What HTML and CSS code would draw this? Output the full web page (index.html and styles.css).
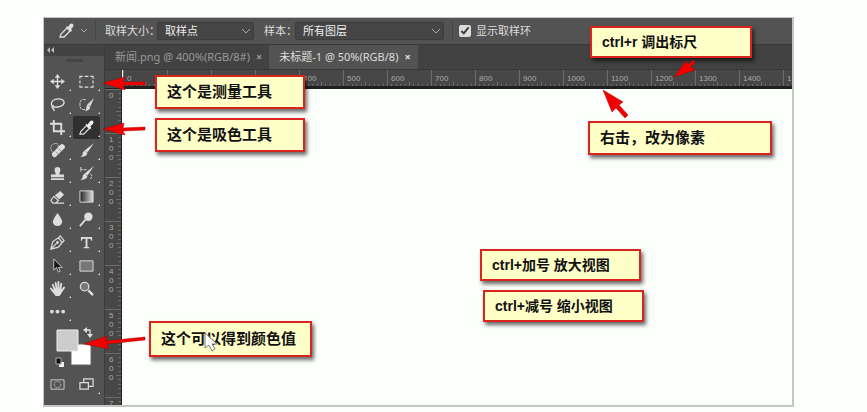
FILE: index.html
```html
<!DOCTYPE html>
<html lang="zh-CN">
<head>
<meta charset="utf-8">
<title>标尺与吸色工具</title>
<link rel="stylesheet" href="styles.css">
</head>
<body>
<main class="window">
  <form class="options">
    <button type="button" class="current" aria-label="吸管工具">
      <svg width="30" height="18" viewBox="0 0 30 18"><path d="M3 15l1-3 6-6 3 3-6 6z" fill="none" stroke="#ddd" stroke-width="1.3"/><path d="M9 5l1-1 1 1 2-3q2-1 3 0t0 3l-2 2 1 1-1 2z" fill="#ddd"/><path d="M24 7l3 3 3-3" fill="none" stroke="#aaa"/></svg>
    </button>
    <label class="size-label" for="size">取样大小：</label>
    <select id="size" class="size"><option>取样点</option></select>
    <label class="layer-label" for="layer">样本：</label>
    <select id="layer" class="layer"><option>所有图层</option></select>
    <label class="ring"><input type="checkbox" checked>显示取样环</label>
  </form>
  <div class="work">
    <aside class="tools">
      <div class="collapse"><svg width="8" height="6" viewBox="0 0 8 6"><path d="M4 0v6L1 3zM8 0v6L5 3z" fill="#bbb"/></svg></div>
      <div class="grip"></div>
      <div class="grid">
        <button aria-label="移动"><svg viewBox="0 0 16 16"><path d="M8 2v12M2 8h12" stroke="#ddd" stroke-width="1.4"/><path d="M8 0l3 4H5zM8 16l3-4H5zM0 8l4-3v6zM16 8l-4-3v6z" fill="#ddd"/></svg></button>
        <button aria-label="选框"><svg viewBox="0 0 16 16"><path d="M1 5V2.500h3M6 2.500h4M12 2.500h3V5M15 7v3M15 12v2h-3M10 14H6M4 14H1v-2M1 10V7" fill="none" stroke="#ddd" stroke-width="1.200"/></svg></button>
        <button aria-label="套索"><svg viewBox="0 0 16 16"><path d="M4 11C-1 8 2 2 9 2s8 6 2 8-7 0-7 0M4 9q-3 1-1 3t1 3" fill="none" stroke="#ddd" stroke-width="1.400"/></svg></button>
        <button aria-label="快速选择"><svg viewBox="0 0 16 16"><path d="M7 3Q1 1 1 8t6 5" fill="none" stroke="#ddd" stroke-dasharray="3 1"/><path d="M16 1l-4 9-3-2zM9 8l3 3q-1 4-6 4 2-1 2-5z" fill="#ddd"/></svg></button>
        <button aria-label="裁剪"><svg viewBox="0 0 16 16"><path d="M0 4h12v12M4 0v12h12" fill="none" stroke="#ddd" stroke-width="2"/></svg></button>
        <button class="active" aria-label="吸管"><svg viewBox="0 0 16 16"><path d="M1 15l1-3 6-6 3 3-6 6z" fill="none" stroke="#ddd" stroke-width="1.300"/><path d="M7 5l1-1 1 1 3-4q2-1 3 0t0 3l-3 3 1 1-1 2z" fill="#eee"/></svg></button>
        <button aria-label="修复画笔"><svg viewBox="0 0 16 16"><path d="M2 9Q-1 3 4 1t5 3" fill="none" stroke="#ddd" stroke-dasharray="2 1"/><path d="M2 11L12 1q4 0 4 4L6 15q-4 1-4-4z" fill="#ddd"/><path d="M8 5l4 4M5 8l4 4" stroke="#535353" stroke-dasharray="1 1"/></svg></button>
        <button aria-label="画笔"><svg viewBox="0 0 16 16"><path d="M16 0L9 10 6 8zM6 8l3 3q-1 4-8 4 3-1 3-5z" fill="#ddd"/></svg></button>
        <button aria-label="图章"><svg viewBox="0 0 16 16"><path d="M6 8Q3 1 8 1t2 7v1h5v3H1V9h5zM1 13h14v2H1z" fill="#ddd"/></svg></button>
        <button aria-label="历史画笔"><svg viewBox="0 0 16 16"><path d="M1 4h7M2 1v5M12 8q4 4-1 6" fill="none" stroke="#ddd" stroke-dasharray="3 1"/><path d="M16 0L9 10 6 8zM6 8l3 3q-1 4-8 4 3-1 3-5z" fill="#ddd"/></svg></button>
        <button aria-label="橡皮擦"><svg viewBox="0 0 16 16"><path d="M5 7l6-5 4 4-5 5z" fill="#ddd"/><path d="M4 8l5 4-3 3H3l-2-3zM6 15h9" fill="none" stroke="#ddd" stroke-width="1.300"/></svg></button>
        <button aria-label="渐变"><svg viewBox="0 0 16 16"><defs><linearGradient id="fade"><stop stop-color="#222"/><stop offset="1" stop-color="#ddd"/></linearGradient></defs><path d="M1 2h14v12H1z" fill="url(#fade)" stroke="#ddd"/></svg></button>
        <button aria-label="模糊"><svg viewBox="0 0 16 16"><path d="M8 1q5 7 5 9a5 5 0 0 1-10 0q0-2 5-9z" fill="#ddd"/></svg></button>
        <button aria-label="减淡"><svg viewBox="0 0 16 16"><circle cx="10" cy="5" r="4.500" fill="#ddd"/><path d="M7 8l-6 7" stroke="#ddd" stroke-width="2"/></svg></button>
        <button aria-label="钢笔"><svg viewBox="0 0 16 16"><path d="M1 15L3 7l6-4 4 5-4 5zM1 15l6-6M9 3l2-2 4 5-2 2" fill="none" stroke="#ddd" stroke-width="1.300"/><circle cx="8" cy="8" r="1.500" fill="#ddd"/></svg></button>
        <button aria-label="文字"><svg viewBox="0 0 16 16"><path d="M2 2h12v4h-1q0-2-2-2H9v8q0 1 2 1v1H5v-1q2 0 2-1V4H5Q3 4 3 6H2z" fill="#ddd"/></svg></button>
        <button aria-label="路径选择"><svg viewBox="0 0 16 16"><path d="M4 1v12l3-3 2 5 2-1-2-4h4z" fill="#151515" stroke="#ccc"/></svg></button>
        <button aria-label="矩形"><svg viewBox="0 0 16 16"><path d="M1 3h14v11H1z" fill="#777" stroke="#ddd"/></svg></button>
        <button aria-label="抓手"><svg viewBox="0 0 16 16"><path d="M5 9L3 4M7 8L6 2M9 8V1M11 9l1-6M4 12L1 8M12 11l3-4" stroke="#ddd" stroke-width="2" stroke-linecap="round"/><path d="M4 8h8l1 3q-1 4-3 5H6q-2-2-3-5z" fill="#ddd"/></svg></button>
        <button class="plain" aria-label="缩放"><svg viewBox="0 0 16 16"><circle cx="6" cy="6" r="4.500" fill="#777" stroke="#ddd" stroke-width="1.400"/><path d="M10 10l5 5" stroke="#ddd" stroke-width="2.500"/></svg></button>
        <button aria-label="更多"><svg viewBox="0 0 16 16"><circle cx="2" cy="8" r="2" fill="#ddd"/><circle cx="8" cy="8" r="2" fill="#ddd"/><circle cx="14" cy="8" r="2" fill="#ddd"/></svg></button>
      </div>
      <svg class="swatches" width="60" height="50" viewBox="0 0 60 50"><path d="M27 21h20v21H27z" fill="#fff" stroke="#666"/><path d="M13 7h21v21H13z" fill="#ccc" stroke="#eee"/><path d="M42 7h4v5" fill="none" stroke="#ddd" stroke-width="1.300"/><path d="M43 4v6l-4-3zM43 11h6l-3 4z" fill="#ddd"/><path d="M15 39h5v5h-5z" fill="#eee"/><path d="M12 35h5v6h-5z" fill="#111" stroke="#aaa"/></svg>
      <div class="grid modes">
        <button class="plain" aria-label="快速蒙版"><svg viewBox="0 0 16 16"><path d="M1 3h14v10H1z" fill="none" stroke="#ccc"/><circle cx="8" cy="8" r="3.500" fill="none" stroke="#ccc" stroke-dasharray="2 1"/></svg></button>
        <button aria-label="屏幕模式"><svg viewBox="0 0 16 16"><path d="M5 8V2h10v8h-5" fill="none" stroke="#ddd" stroke-width="1.300"/><path d="M1 6h9v7H1z" fill="#535353" stroke="#ddd" stroke-width="1.300"/></svg></button>
      </div>
    </aside>
    <section class="document">
      <nav class="tabs">
        <div class="tab"><a href="#first">新闻.png @ 400%(RGB/8#)</a><button aria-label="关闭">×</button></div>
        <div class="tab selected"><a href="#second">未标题-1 @ 50%(RGB/8)</a><button aria-label="关闭">×</button></div>
      </nav>
      <div class="sheet">
        <div class="corner"></div>
        <div class="ruler across">
          <svg class="ticks" width="100%" height="100%"><defs><pattern id="tx" width="44" height="16" patternUnits="userSpaceOnUse"><path d="M0 0h1v16H0z" fill="#6c6c6c"/><path d="M4 14h1v2H4zM9 14h1v2H9zM13 14h1v2h-1zM18 14h1v2h-1zM22 12h1v4h-1zM26 14h1v2h-1zM31 14h1v2h-1zM35 14h1v2h-1zM40 14h1v2h-1z" fill="#6c6c6c"/></pattern></defs><rect width="100%" height="100%" fill="url(#tx)"/></svg>
          <span>0</span><span>100</span><span>200</span><span>300</span><span>400</span><span>500</span><span>600</span><span>700</span><span>800</span><span>900</span><span>1000</span><span>1100</span><span>1200</span><span>1300</span><span>1400</span><span>1</span>
        </div>
        <div class="ruler down">
          <svg class="ticks" width="100%" height="100%"><defs><pattern id="ty" width="17" height="44" patternUnits="userSpaceOnUse"><path d="M0 0h17v1H0z" fill="#6c6c6c"/><path d="M13 4h3v1h-3zM13 9h3v1h-3zM13 13h3v1h-3zM13 18h3v1h-3zM11 22h5v1h-5zM13 26h3v1h-3zM13 31h3v1h-3zM13 35h3v1h-3zM13 40h3v1h-3z" fill="#6c6c6c"/></pattern></defs><rect width="100%" height="100%" fill="url(#ty)"/></svg>
          <span>0</span><span>1<br>0<br>0</span><span>2<br>0<br>0</span><span>3<br>0<br>0</span><span>4<br>0<br>0</span><span>5<br>0<br>0</span><span>6<br>0<br>0</span><span>7</span>
        </div>
        <div class="canvas"></div>
      </div>
    </section>
  </div>
  <p class="note measure">这个是测量工具</p>
  <p class="note pick">这个是吸色工具</p>
  <p class="note show">ctrl+r 调出标尺</p>
  <p class="note unit">右击，改为像素</p>
  <p class="note grow">ctrl+加号 放大视图</p>
  <p class="note shrink">ctrl+减号 缩小视图</p>
  <p class="note value">这个可以得到颜色值</p>
  <svg class="arrows" width="750" height="388" viewBox="0 0 750 388">
    <g fill="#f20000" stroke="#a00" stroke-width=".5">
      <path d="M59 65l22-6-2 5h22v3H79l2 5z"/>
      <path d="M59 111l21-6-1 5 22-1v3l-22 1 2 4z"/>
      <path d="M630 59l12-16 2 4 5-5 2 2-4 5 4 3z"/>
      <path d="M559 72l20 12-4 3 9 10-3 3-9-10-4 4z"/>
      <path d="M40 326l23-8-1 5 39-4v3l-38 4 2 5z"/>
    </g>
    <path d="M161 315v15l4-3 3 6 3-2-3-5h5z" fill="#fff" stroke="#777"/>
  </svg>
</main>
</body>
</html>
```
FILE: styles.css
```css
* { box-sizing: border-box; }
body {
  margin: 0;
  padding: 17px 73px 6px 43px;
  background: #fdfffd;
  font: 11px/16px "Noto Sans", "Noto Sans CJK SC", sans-serif;
  color: #ddd;
}
button { border: 0; padding: 0; background: none; color: inherit; font: inherit; }
.window { position: relative; border: 1px solid #c4c6c4; border-width: 1px 2px 2px 1px; }
.options { display: flex; align-items: center; height: 27px; background: #535353; border-bottom: 1px solid #3a3a3a; }
.current { width: 52px; height: 20px; margin-right: 9px; padding-left: 13px; border-right: 1px solid #444; }
.current svg { display: block; }
.size-label { width: 52px; white-space: nowrap; }
select {
  appearance: none;
  height: 18px;
  padding: 0 7px;
  border: 1px solid #3d3d3d;
  border-radius: 2px;
  color: #eee;
  font: inherit;
  line-height: 16px;
  background:
    linear-gradient(45deg, transparent 46%, #aaa 46% 60%, transparent 60%) right 7px center / 4px 4px no-repeat,
    linear-gradient(-45deg, transparent 46%, #aaa 46% 60%, transparent 60%) right 3px center / 4px 4px no-repeat,
    #454545;
}
.size { width: 97px; margin-right: 10px; }
.layer-label { width: 31px; white-space: nowrap; }
.layer { width: 149px; }
.ring { display: flex; align-items: center; gap: 5px; height: 20px; margin-left: 8px; padding-left: 6px; border-left: 1px solid #444; white-space: nowrap; }
.ring input { width: 12px; height: 12px; margin: 0; accent-color: #ddd; }
.work { display: flex; }
.tools { width: 61px; flex: none; background: #535353; border-right: 1px solid #3c3c3c; }
.collapse { height: 11px; padding: 2px; background: #434343; line-height: 0; }
.grip { width: 17px; height: 3px; margin: 3px auto 8px; background: #454545; }
.grid { display: grid; grid-template-columns: 27px 27px; column-gap: 2px; }
.grid button { position: relative; display: grid; place-items: center; height: 23px; border-radius: 2px; }
.grid button svg { width: 15px; height: 15px; }
.grid button::after { content: ""; position: absolute; right: 0; bottom: 2px; border: 1px solid; border-color: transparent #ddd #ddd transparent; }
.grid .plain::after { content: none; }
.grid .active { background: #303030; }
.swatches { display: block; }
.modes { padding-bottom: 9px; }
.document { flex: 1; min-width: 0; display: flex; flex-direction: column; }
.tabs { display: flex; height: 25px; background: #424242; border-bottom: 1px solid #383838; }
.tab { display: flex; align-items: center; gap: 6px; padding: 0 7px 0 10px; color: #999; white-space: nowrap; }
.tab a { color: inherit; text-decoration: none; }
.tab button { font-weight: bold; }
.selected { background: #535353; color: #ddd; }
.sheet { flex: 1; display: grid; grid-template-columns: 17px 1fr; grid-template-rows: 19px 1fr; background: #fdfffd; }
.corner { background: #474747; border-right: 1px solid #333; border-bottom: 1px solid #222; }
.ruler { position: relative; display: flex; overflow: hidden; background: #474747; color: #aaa; font: 8px/9px "Liberation Sans", sans-serif; }
.ticks { position: absolute; inset: 0; }
.across { margin-left: 1px; border-bottom: 3px solid #202020; }
.across span { flex: 0 0 44px; padding: 4px 0 0 4px; }
.down { flex-direction: column; border-right: 1px solid #222; height: 0; min-height: 100%; }
.down span { flex: 0 0 44px; padding: 2px 0 0 4px; }
.note { position: absolute; margin: 0; padding: 0 10px; border: 2px solid #d9251d; background: #ffffc8; box-shadow: 2px 3px 4px #0009; color: #111; font: bold 15px/30px "Liberation Sans", "Noto Sans CJK SC", sans-serif; white-space: nowrap; }
.measure, .pick { left: 111px; width: 150px; }
.measure { top: 57px; }
.pick { top: 100px; }
.show, .grow, .shrink { font-size: 14px; line-height: 28px; }
.show { left: 546px; top: 8px; width: 162px; }
.unit { left: 544px; top: 103px; width: 184px; }
.grow { left: 436px; top: 231px; width: 161px; }
.shrink { left: 439px; top: 272px; width: 161px; }
.value { left: 105px; top: 303px; width: 163px; line-height: 32px; }
.arrows { position: absolute; left: 0; top: 0; pointer-events: none; }
```
